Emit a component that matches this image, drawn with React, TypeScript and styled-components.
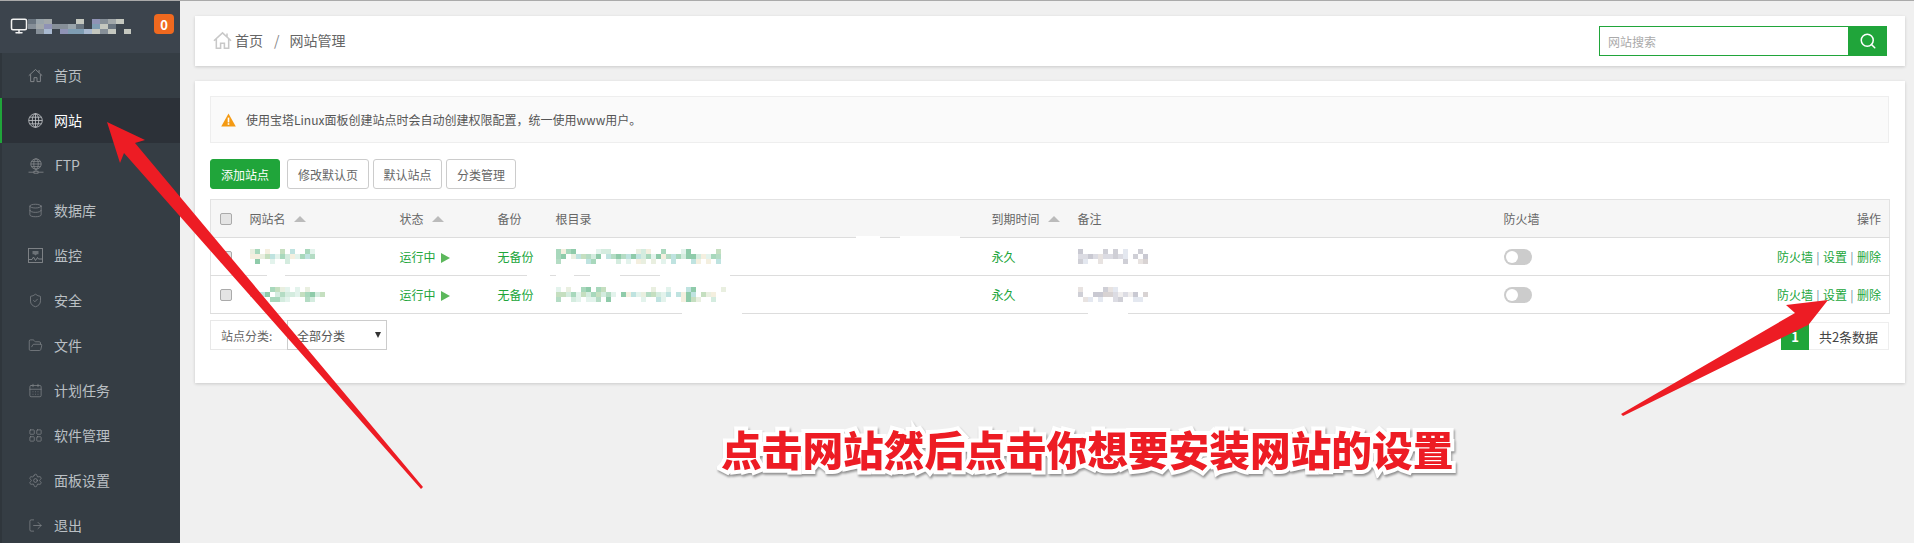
import React from "react";
import styled, { createGlobalStyle } from "styled-components";
import {
  Database,
  ShieldCheck,
  FolderOpen,
  CalendarDays,
  LayoutGrid,
  Settings,
  LogOut,
  Monitor,
  Search,
} from "lucide-react";

const FONT = `"Noto Sans CJK SC", "Liberation Sans", sans-serif`;
const GREEN = "#20a53a";

const Global = createGlobalStyle`
  html, body { margin: 0; padding: 0; background: #f0f0f0; }
  body { font-family: ${FONT}; font-size: 12px; color: #666; overflow: hidden; }
  * { box-sizing: border-box; }
`;

const Page = styled.div`
  position: relative;
  display: flex;
  width: 1914px;
  height: 543px;
  border-top: 1px solid #aaa;
  overflow: hidden;
`;

const Sidebar = styled.aside`
  width: 180px;
  flex: none;
  background: #353d44;
  border-left: 2px solid #2f363c;
`;

const Brand = styled.div`
  height: 52px;
  margin-left: -2px;
  padding: 0 6px 2px 10px;
  display: flex;
  align-items: center;
  background: #3c444d;
  color: #f2f2f2;
`;

const BrandSpacer = styled.div`
  flex: 1;
`;

const Badge = styled.span`
  width: 20px;
  height: 20px;
  border-radius: 4px;
  background: #f0691f;
  color: #fff;
  font-weight: 700;
  font-size: 13px;
  display: flex;
  align-items: center;
  justify-content: center;
  margin-top: -4px;
`;

const NavItem = styled.div<{ $active?: boolean }>`
  height: 45px;
  display: flex;
  align-items: center;
  gap: 11px;
  margin-left: -2px;
  padding-left: ${(p) => (p.$active ? "26px" : "28px")};
  font-size: 14px;
  color: ${(p) => (p.$active ? "#fff" : "#bbc0c4")};
  background: ${(p) => (p.$active ? "#2c3138" : "transparent")};
  border-left: ${(p) => (p.$active ? `2px solid ${GREEN}` : "none")};
  svg { color: ${(p) => (p.$active ? "#c4c7ca" : "#85898d")}; flex: none; }
`;

const NavLabel = styled.span`
  position: relative;
  top: -1px;
`;

const Main = styled.main`
  flex: 1;
  min-width: 0;
  padding: 15px 9px 0 15px;
  display: flex;
  flex-direction: column;
  gap: 15px;
`;

const Card = styled.section`
  background: #fff;
  box-shadow: 0 1px 3px rgba(0, 0, 0, 0.16);
`;

const TopBar = styled(Card)`
  height: 50px;
  padding: 0 18px;
  display: flex;
  align-items: center;
  justify-content: space-between;
`;

const Crumbs = styled.nav`
  display: flex;
  align-items: center;
  padding-bottom: 2px;
  font-size: 14px;
  color: #666;
  svg { color: #c8c8c8; margin-right: 3px; }
`;

const CrumbSep = styled.span`
  margin: 0 10px 0 11px;
  color: #888;
`;

const SearchBox = styled.div`
  width: 288px;
  height: 30px;
  display: flex;
  border: 1px solid ${GREEN};
  border-right: none;
`;

const SearchInput = styled.input`
  flex: 1;
  min-width: 0;
  border: none;
  outline: none;
  padding: 0 8px;
  font: 12px ${FONT};
  &::placeholder { color: #aaa; }
`;

const SearchButton = styled.button`
  width: 39px;
  margin: -1px 0;
  border: none;
  background: ${GREEN};
  color: #fff;
  display: flex;
  align-items: center;
  justify-content: center;
  padding: 0;
`;

const Panel = styled(Card)`
  padding: 15px 16px 33px 15px;
`;

const Alert = styled.div`
  height: 47px;
  margin-bottom: 16px;
  padding-left: 10px;
  display: flex;
  align-items: center;
  gap: 10px;
  background: #fafafa;
  border: 1px solid #eee;
  color: #555;
`;

const Toolbar = styled.div`
  display: flex;
  gap: 4px;
  margin-bottom: 10px;
`;

const Btn = styled.button<{ $primary?: boolean; $width: number }>`
  height: 30px;
  width: ${(p) => p.$width}px;
  margin-right: ${(p) => (p.$primary ? "3px" : "0")};
  padding: 0;
  border-radius: 3px;
  font: 12px ${FONT};
  border: 1px solid ${(p) => (p.$primary ? GREEN : "#ccc")};
  background: ${(p) => (p.$primary ? GREEN : "#fff")};
  color: ${(p) => (p.$primary ? "#fff" : "#666")};
`;

const Table = styled.table`
  width: 1679px;
  table-layout: fixed;
  border-collapse: collapse;
  border: 1px solid #e2e2e2;
`;

const Th = styled.th`
  height: 38px;
  padding: 0 8px 0 10px;
  background: #f6f6f6;
  border-bottom: 1px solid #ddd;
  font-weight: 400;
  text-align: left;
  white-space: nowrap;
  color: #666;
`;

const Td = styled.td<{ $green?: boolean }>`
  height: 38px;
  padding: 0 8px 0 10px;
  border-bottom: 1px solid #ddd;
  text-align: left;
  white-space: nowrap;
  color: ${(p) => (p.$green ? GREEN : "#666")};
`;

const Check = styled.input.attrs({ type: "checkbox" })`
  appearance: none;
  display: block;
  width: 12px;
  height: 12px;
  margin: 0 0 0 -1px;
  background: #e4e4e4;
  border: 1px solid #aaa;
  border-radius: 2px;
`;

const Sort = styled.span`
  display: inline-block;
  width: 0;
  height: 0;
  margin-left: 8px;
  vertical-align: 2px;
  border-left: 6px solid transparent;
  border-right: 6px solid transparent;
  border-bottom: 6px solid #bbb;
`;

const Play = styled.span`
  display: inline-block;
  width: 0;
  height: 0;
  margin-left: 5px;
  vertical-align: -1px;
  border-top: 5px solid transparent;
  border-bottom: 5px solid transparent;
  border-left: 9px solid #5cb85c;
`;

const Toggle = styled.span`
  display: block;
  width: 28px;
  height: 16px;
  border-radius: 8px;
  background: #ccc;
  position: relative;
  &::after {
    content: "";
    position: absolute;
    left: 2px;
    top: 2px;
    width: 12px;
    height: 12px;
    border-radius: 50%;
    background: #fff;
  }
`;

const Action = styled.a`
  color: ${GREEN};
`;

const ActionSep = styled.span`
  display: inline-block;
  width: 10px;
  text-align: center;
  color: #6f8f9f;
`;

const SplitRow = styled.div`
  display: flex;
  justify-content: space-between;
  align-items: center;
`;

const Footer = styled.div`
  margin-top: 6px;
  display: flex;
  justify-content: space-between;
  align-items: flex-end;
`;

const Category = styled.div`
  display: flex;
  height: 30px;
`;

const CategoryLabel = styled.span`
  width: 77px;
  padding-left: 10px;
  display: flex;
  align-items: center;
  border: 1px solid #e8e8e8;
  border-right: none;
  color: #666;
`;

const CategorySelect = styled.div`
  width: 100px;
  padding: 0 5px 0 9px;
  display: flex;
  align-items: center;
  justify-content: space-between;
  border: 1px solid #ccc;
  color: #555;
  &::after {
    content: "";
    border-left: 3.5px solid transparent;
    border-right: 3.5px solid transparent;
    border-top: 6px solid #333;
  }
`;

const Pager = styled.div`
  display: flex;
  height: 28px;
  font-size: 13px;
`;

const PageCurrent = styled.span`
  width: 28px;
  background: ${GREEN};
  color: #fff;
  font-weight: 700;
  display: flex;
  align-items: center;
  justify-content: center;
`;

const PageTotal = styled.span`
  width: 80px;
  border: 1px solid #eee;
  border-left: none;
  color: #444;
  display: flex;
  align-items: center;
  justify-content: center;
`;

const Annotations = styled.svg`
  position: absolute;
  left: 0;
  top: -1px;
  pointer-events: none;
`;

const Caption = styled.div`
  position: absolute;
  left: 721px;
  top: 420px;
  font-family: ${FONT};
  font-size: 40.7px;
  line-height: 56px;
  font-weight: 900;
  white-space: nowrap;
  color: #ed1c24;
  -webkit-text-stroke: 8px #fff;
  paint-order: stroke fill;
  filter: drop-shadow(1px 2px 1px rgba(0, 0, 0, 0.4));
`;

const MosaicSvg = styled.svg`
  display: block;
  flex: none;
`;

const GREENS = ["#a8d8bc", "#d4ecdf", "#c5dfc0", "#bfe3e0", "#e9efe0", "#f4efdf", "#8fcbaa", "#e3f3ec", "#b4dcc4", "#fff"];
const GREYS = ["#d8d3d3", "#cfcfd6", "#e8e3e1", "#dcdce3", "#f0eeee", "#fff", "#c9c9d2", "#e4e8f0"];
const DARKS = ["#868f98", "#a2a8aa", "#c4c7bf", "#7f9db3", "#6a7580", "#b8bfae", "#8f93b5", "#99a4ab", "#a9b9d0", "#3c444d"];

function Mosaic({
  width,
  height,
  seed,
  colors,
  cellW = 5,
  cellH = 5,
  density = 0.45,
}: {
  width: number;
  height: number;
  seed: number;
  colors: string[];
  cellW?: number;
  cellH?: number;
  density?: number;
}) {
  let s = seed;
  const next = () => {
    s = (s * 16807) % 2147483647;
    return s / 2147483647;
  };
  const cells: React.ReactNode[] = [];
  for (let y = 0; y < height; y += cellH) {
    for (let x = 0; x < width; x += cellW) {
      const mid = y >= cellH && y < height - cellH;
      if (!mid && next() > density) continue;
      const c = colors[Math.floor(next() * colors.length)];
      cells.push(<rect key={`${x}-${y}`} x={x} y={y} width={cellW} height={cellH} fill={c} />);
    }
  }
  return (
    <MosaicSvg width={width} height={height}>
      {cells}
    </MosaicSvg>
  );
}

function HomeIcon({ size = 16, sw = 1 }: { size?: number; sw?: number }) {
  return (
    <svg width={size} height={size} viewBox="0 0 16 16" fill="none" stroke="currentColor" strokeWidth={sw}>
      <path d="M0.8 8.2 8 1.6l7.2 6.6M2.8 6.8v7.7h3.6v-4.2h3.2v4.2h3.6V6.8M11.8 2.2v2.6" />
    </svg>
  );
}

function GlobeIcon() {
  return (
    <svg width="15" height="15" viewBox="0 0 15 15" fill="none" stroke="currentColor" strokeWidth="0.8">
      <circle cx="7.5" cy="7.5" r="6.8" />
      <ellipse cx="7.5" cy="7.5" rx="3.2" ry="6.8" />
      <path d="M7.5 0.7v13.6M0.7 7.5h13.6M1.6 4.2h11.8M1.6 10.8h11.8" />
    </svg>
  );
}

function FtpIcon() {
  return (
    <svg width="16" height="16" viewBox="0 0 16 16" fill="none" stroke="currentColor" strokeWidth="0.8">
      <circle cx="8" cy="6" r="5.2" />
      <ellipse cx="8" cy="6" rx="2.2" ry="5.2" />
      <path d="M2.8 6h10.4M3.6 3.4h8.8M3.6 8.6h8.8M8 11.2v2M0.5 14.2h5.5M10 14.2h5.5" />
      <rect x="6" y="13.2" width="4" height="2" />
    </svg>
  );
}

function ChartIcon() {
  return (
    <svg width="15" height="15" viewBox="0 0 15 15" fill="none" stroke="currentColor" strokeWidth="0.9">
      <rect x="0.5" y="0.5" width="14" height="14" />
      <path d="M1 11.5h3l1.5-2.5 2 3.5 2-3 1 1.5H14" />
      <path d="M4.5 3h6v3.2H9L7.5 7.5 6 6.2H4.5z" fill="currentColor" stroke="none" opacity="0.7" />
    </svg>
  );
}

function WarnIcon() {
  return (
    <svg width="15" height="14" viewBox="0 0 15 14" style={{ flex: "none" }}>
      <path d="M7.5 0.5 14.8 13.5H0.2z" fill="#f49a13" />
      <rect x="6.7" y="4.6" width="1.6" height="4.8" fill="#fff" />
      <rect x="6.7" y="10.2" width="1.6" height="1.6" fill="#fff" />
    </svg>
  );
}

const icon = { size: 15, strokeWidth: 1.15 };

const NAV: { label: string; node: React.ReactNode; active?: boolean }[] = [
  { label: "首页", node: <HomeIcon size={15} /> },
  { label: "网站", node: <GlobeIcon />, active: true },
  { label: "FTP", node: <FtpIcon /> },
  { label: "数据库", node: <Database {...icon} /> },
  { label: "监控", node: <ChartIcon /> },
  { label: "安全", node: <ShieldCheck {...icon} /> },
  { label: "文件", node: <FolderOpen {...icon} /> },
  { label: "计划任务", node: <CalendarDays {...icon} /> },
  { label: "软件管理", node: <LayoutGrid {...icon} /> },
  { label: "面板设置", node: <Settings {...icon} /> },
  { label: "退出", node: <LogOut {...icon} /> },
];

const COLS = [29, 150, 98, 58, 436, 86, 426, 396];
const ROWS = [
  { name: 11, path: 23, note: 37, nameW: 65, pathW: 165 },
  { name: 43, path: 59, note: 71, nameW: 75, pathW: 170 },
];

const NOISE = [
  [267, 273, 18, 4],
  [527, 273, 23, 4],
  [540, 284, 8, 22],
  [556, 274, 18, 3],
  [590, 274, 30, 3],
  [660, 274, 70, 3],
  [755, 276, 20, 3],
  [856, 236, 24, 3],
  [900, 236, 60, 2],
  [682, 312, 60, 3],
  [1088, 312, 40, 3],
];

export default function App() {
  return (
    <Page>
      <Global />
      <Sidebar>
        <Brand>
          <Monitor size={18} strokeWidth={2} />
          <Mosaic width={103} height={15} seed={19} colors={DARKS} cellW={8} cellH={5} density={0.8} />
          <BrandSpacer />
          <Badge>0</Badge>
        </Brand>
        {NAV.map((n) => (
          <NavItem key={n.label} $active={n.active}>
            {n.node}
            <NavLabel>{n.label}</NavLabel>
          </NavItem>
        ))}
      </Sidebar>
      <Main>
        <TopBar>
          <Crumbs>
            <HomeIcon size={19} sw={1.3} />
            首页
            <CrumbSep>/</CrumbSep>
            网站管理
          </Crumbs>
          <SearchBox>
            <SearchInput placeholder="网站搜索" />
            <SearchButton>
              <Search size={18} strokeWidth={2} />
            </SearchButton>
          </SearchBox>
        </TopBar>
        <Panel>
          <Alert>
            <WarnIcon />
            使用宝塔Linux面板创建站点时会自动创建权限配置，统一使用www用户。
          </Alert>
          <Toolbar>
            <Btn $primary $width={70}>添加站点</Btn>
            <Btn $width={82}>修改默认页</Btn>
            <Btn $width={69}>默认站点</Btn>
            <Btn $width={70}>分类管理</Btn>
          </Toolbar>
          <Table>
            <colgroup>
              {COLS.map((w, i) => (
                <col key={i} width={w} />
              ))}
            </colgroup>
            <thead>
              <tr>
                <Th><Check /></Th>
                <Th>网站名<Sort /></Th>
                <Th>状态<Sort /></Th>
                <Th>备份</Th>
                <Th>根目录</Th>
                <Th>到期时间<Sort /></Th>
                <Th>备注</Th>
                <Th>
                  <SplitRow>
                    <span>防火墙</span>
                    <span>操作</span>
                  </SplitRow>
                </Th>
              </tr>
            </thead>
            <tbody>
              {ROWS.map((r) => (
                <tr key={r.name}>
                  <Td><Check /></Td>
                  <Td><Mosaic width={r.nameW} height={15} seed={r.name} colors={GREENS} /></Td>
                  <Td $green>运行中<Play /></Td>
                  <Td $green>无备份</Td>
                  <Td><Mosaic width={r.pathW} height={15} seed={r.path} colors={GREENS} /></Td>
                  <Td $green>永久</Td>
                  <Td><Mosaic width={70} height={15} seed={r.note} colors={GREYS} /></Td>
                  <Td>
                    <SplitRow>
                      <Toggle />
                      <span>
                        <Action>防火墙</Action>
                        <ActionSep>|</ActionSep>
                        <Action>设置</Action>
                        <ActionSep>|</ActionSep>
                        <Action>删除</Action>
                      </span>
                    </SplitRow>
                  </Td>
                </tr>
              ))}
            </tbody>
          </Table>
          <Footer>
            <Category>
              <CategoryLabel>站点分类:</CategoryLabel>
              <CategorySelect>全部分类</CategorySelect>
            </Category>
            <Pager>
              <PageCurrent>1</PageCurrent>
              <PageTotal>共2条数据</PageTotal>
            </Pager>
          </Footer>
        </Panel>
      </Main>
      <Annotations width="1914" height="543" viewBox="0 0 1914 543">
        {NOISE.map(([x, y, w, h]) => (
          <rect key={`${x}-${y}`} x={x} y={y} width={w} height={h} fill="#fff" />
        ))}
        <polygon points="107,122 145,140 135,143 423,487 421,489 124,153 120,163" fill="#ed1c24" />
        <polygon points="1828,300 1786,305 1795,313 1621,414 1623,416 1808,325 1802,333" fill="#ed1c24" />
      </Annotations>
      <Caption>点击网站然后点击你想要安装网站的设置</Caption>
    </Page>
  );
}
